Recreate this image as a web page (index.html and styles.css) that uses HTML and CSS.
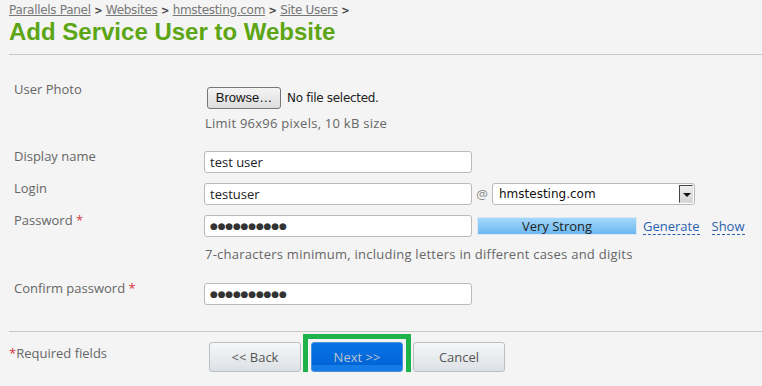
FILE: index.html
```html
<!DOCTYPE html>
<html lang="en">
    <head>
        <title>Add Service User to Website</title>
        <meta charset="UTF-8">
        <meta name="viewport" content="width=device-width, initial-scale=1">
        <link rel="stylesheet" href="styles.css">
    </head>
    <body>
        <div class="page">
            <div class="crumbs">
                <a href="#">Parallels Panel</a> <b>&gt;</b>
                <a href="#">Websites</a> <b>&gt;</b>
                <a href="#">hmstesting.com</a> <b>&gt;</b>
                <a href="#">Site Users</a> <b>&gt;</b>
            </div>
            <h1 class="title">Add Service User to Website</h1>

            <form class="form">
                <div class="row row-photo">
                    <div class="label">User Photo</div>
                    <div class="field">
                        <div class="file">
                            <span class="browse">Browse…</span>
                            <span class="file-name">No file selected.</span>
                        </div>
                        <div class="hint hint-photo">Limit 96x96 pixels, 10 kB size</div>
                    </div>
                </div>

                <div class="row">
                    <div class="label">Display name</div>
                    <div class="field">
                        <div class="input">test user</div>
                    </div>
                </div>

                <div class="row">
                    <div class="label">Login</div>
                    <div class="field inline">
                        <div class="input">testuser</div>
                        <span class="at">@</span>
                        <div class="select">
                            <span class="select-text">hmstesting.com</span>
                            <span class="select-arrow"></span>
                        </div>
                    </div>
                </div>

                <div class="row row-password">
                    <div class="label">Password <span class="req">*</span></div>
                    <div class="field">
                        <div class="inline">
                            <div class="input dots">●●●●●●●●●●</div>
                            <div class="strength">Very Strong</div>
                            <a href="#" class="action">Generate</a>
                            <a href="#" class="action">Show</a>
                        </div>
                        <div class="hint hint-password">7-characters minimum, including letters in different cases and digits</div>
                    </div>
                </div>

                <div class="row">
                    <div class="label">Confirm password <span class="req">*</span></div>
                    <div class="field">
                        <div class="input dots">●●●●●●●●●●</div>
                    </div>
                </div>
            </form>

            <div class="footer">
                <div class="required"><span class="req">*</span>Required fields</div>
                <div class="buttons">
                    <button class="btn">&lt;&lt; Back</button>
                    <span class="highlight"><button class="btn btn-primary">Next &gt;&gt;</button></span>
                    <button class="btn">Cancel</button>
                </div>
            </div>
        </div>
    </body>
</html>
```

FILE: styles.css
```css
html {
    box-sizing: border-box;
}
*, *:before, *:after {
    box-sizing: inherit;
}
body {
    margin: 0;
    background: #f4f4f4;
    font-family: "Open Sans", "DejaVu Sans", sans-serif;
    font-size: 13px;
    color: #666;
}
.page {
    padding-left: 9px;
}
.crumbs {
    padding-top: 3px;
    font-size: 12px;
    line-height: 15px;
    color: #555;
    font-family: "DejaVu Sans", sans-serif;
    letter-spacing: -.3px;
}
    .crumbs a {
        color: #777;
        text-decoration: underline;
    }
    .crumbs b {
        font-size: 10px;
        color: #444;
    }
.title {
    margin: 0;
    padding-bottom: 8px;
    border-bottom: 1px solid #c8c8c8;
    font-family: "Liberation Sans", Arial, sans-serif;
    font-size: 24px;
    line-height: 28px;
    font-weight: bold;
    color: #5ca514;
}

.form {
    padding: 25px 0 0 5px;
}
.row {
    display: flex;
    margin-bottom: 6px;
}
    .row .label {
        width: 190px;
        flex: none;
        line-height: 18px;
        color: #666;
    }
    .row .field {
        padding-top: 4px;
    }
.row-photo {
    margin-bottom: 15px;
}
    .row-photo .field {
        padding-top: 7px;
    }
.row-password {
    margin-bottom: 16px;
}
.inline {
    display: flex;
    align-items: center;
}
.req {
    color: #d6343a;
}

.file {
    display: flex;
    align-items: center;
    height: 22px;
}
    .browse {
        margin-left: 3px;
        width: 74px;
        height: 22px;
        line-height: 20px;
        text-align: center;
        border: 1px solid #767676;
        border-radius: 3px;
        background: linear-gradient(#f4f4f4, #dedede);
        font-family: "Liberation Sans", Arial, sans-serif;
        font-size: 13px;
        color: #111;
    }
    .file-name {
        margin-left: 6px;
        font-family: "DejaVu Sans", sans-serif;
        font-size: 12px;
        color: #222;
        letter-spacing: -.3px;
    }
.hint {
    line-height: 18px;
    color: #666;
    padding-left: 1px;
    letter-spacing: .25px;
}
.hint-photo {
    margin-top: 5px;
}
.hint-password {
    margin-top: 8px;
}

.input {
    width: 268px;
    height: 22px;
    padding: 0 5px;
    line-height: 20px;
    background: #fff;
    border: 1px solid #b9b9b9;
    border-radius: 3px;
    color: #222;
}
.input.dots {
    font-size: 9px;
    letter-spacing: -.2px;
    color: #333;
}
.at {
    width: 20px;
    text-align: center;
    color: #888;
}
.select {
    display: flex;
    align-items: center;
    width: 203px;
    height: 22px;
    padding: 0 1px 0 6px;
    background: #fff;
    border: 1px solid #b9b9b9;
    border-radius: 3px;
}
    .select-text {
        flex: 1;
        font-family: "DejaVu Sans", sans-serif;
        font-size: 12px;
        color: #111;
    }
    .select-arrow {
        position: relative;
        width: 14px;
        height: 18px;
        border: 1px solid;
        border-color: #444 #ddd #ddd #444;
        background: linear-gradient(#f0f0f0, #d4d4d4);
    }
        .select-arrow:after {
            content: "";
            position: absolute;
            left: 3px;
            top: 7px;
            border: 4px solid transparent;
            border-top: 4px solid #111;
            border-bottom: 0;
        }

.strength {
    width: 160px;
    height: 18px;
    margin-left: 5px;
    line-height: 17px;
    text-align: center;
    color: #222;
    background: linear-gradient(#a4d8fb, #6cb8f1);
    border: 1px solid #dbe9f3;
}
.action {
    margin-left: 6px;
    color: #2a5fb0;
    text-decoration: none;
    border-bottom: 1px dashed #2a5fb0;
    line-height: 16px;
}
.action + .action {
    margin-left: 12px;
}

.footer {
    display: flex;
    margin-top: 26px;
    padding-top: 10px;
    border-top: 1px solid #c8c8c8;
}
.required {
    width: 200px;
    padding-top: 2px;
    line-height: 18px;
    color: #666;
}
.buttons {
    display: flex;
    align-items: flex-start;
    gap: 10px;
}
.btn {
    display: block;
    width: 92px;
    height: 30px;
    font-family: "Open Sans", sans-serif;
    font-size: 13px;
    color: #555;
    border: 1px solid #b9bec4;
    border-radius: 3px;
    background: linear-gradient(#f5f7f9, #dde1e5);
    cursor: pointer;
}
.highlight {
    display: block;
    margin: -8px;
    padding: 3px;
    border: 5px solid #20b24a;
}
.btn-primary {
    color: #b8c4d6;
    border-color: #4f8fd9;
    background: linear-gradient(#0a74e4, #0064d6 80%, #137ce6 80%);
}
```
